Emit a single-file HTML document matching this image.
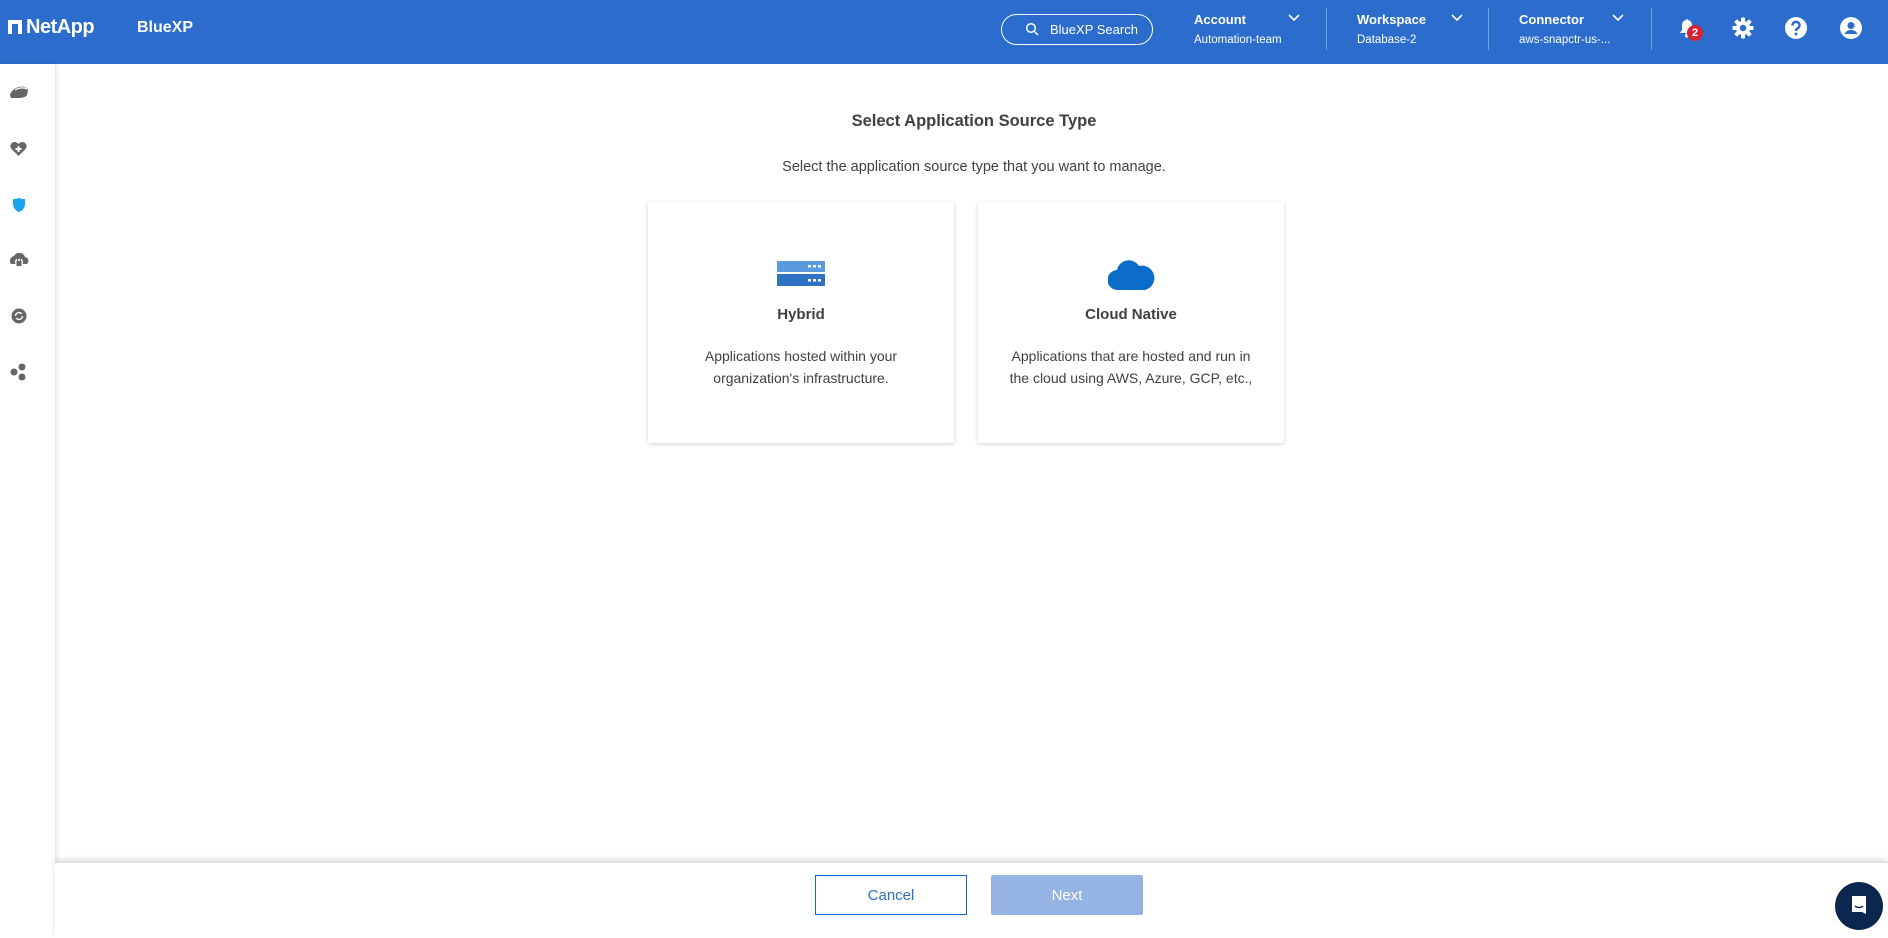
<!DOCTYPE html>
<html><head><style>
*{box-sizing:border-box;margin:0;padding:0}
body{width:1888px;height:938px;overflow:hidden;background:#fff;font-family:"Liberation Sans",sans-serif;position:relative;color:#404040}
.hdr{position:absolute;left:0;top:0;width:1888px;height:64px;background:#2b6ccc;color:#fff}
.abs{position:absolute}
.side{position:absolute;left:0;top:64px;width:55px;height:874px;background:#fff;box-shadow:2px 0 4px rgba(0,0,0,.1)}
.card{position:absolute;top:202px;width:306px;height:241px;background:#fff;box-shadow:0 1px 4px rgba(0,0,0,.18);text-align:center}
.card h3{position:absolute;top:104px;width:100%;font-size:15px;font-weight:bold;color:#404040}
.card p{position:absolute;top:143px;width:100%;font-size:14px;line-height:22px;color:#404040}
.lbl{font-size:13px;font-weight:bold}
.sub{font-size:11.5px}
.div{position:absolute;top:8px;width:1px;height:42px;background:rgba(255,255,255,.35)}
</style></head><body>
<div class="hdr">
 <div class="abs" style="left:8px;top:20px;width:14px;height:14px;background:#fff"></div>
 <div class="abs" style="left:12px;top:24px;width:6px;height:10px;background:#2b6ccc"></div>
 <div class="abs" style="left:26px;top:16px;font-size:20px;font-weight:bold;letter-spacing:-.5px">NetApp</div>
 <div class="abs" style="left:137px;top:19px;font-size:16px;font-weight:bold">BlueXP</div>
 <div class="abs" style="left:1001px;top:14px;width:152px;height:31px;border:1px solid #fff;border-radius:16px;font-size:13px;padding:7px 0 0 48px">BlueXP Search</div>
 <svg class="abs" style="left:1025px;top:22px" width="14" height="14" viewBox="0 0 14 14"><circle cx="6" cy="6" r="4.3" fill="none" stroke="#fff" stroke-width="1.5"/><path d="M9 9l4 4" stroke="#fff" stroke-width="1.5"/></svg>
 <div class="abs" style="left:1194px;top:12px"><div class="lbl">Account</div><div class="sub" style="margin-top:7px">Automation-team</div></div>
 <svg class="abs" style="left:1288px;top:14px" width="12" height="8"><path d="M1 1l5 5 5-5" fill="none" stroke="#fff" stroke-width="1.6"/></svg>
 <div class="div" style="left:1326px"></div>
 <div class="abs" style="left:1357px;top:12px"><div class="lbl">Workspace</div><div class="sub" style="margin-top:7px">Database-2</div></div>
 <svg class="abs" style="left:1451px;top:14px" width="12" height="8"><path d="M1 1l5 5 5-5" fill="none" stroke="#fff" stroke-width="1.6"/></svg>
 <div class="div" style="left:1488px"></div>
 <div class="abs" style="left:1519px;top:12px"><div class="lbl">Connector</div><div class="sub" style="margin-top:7px">aws-snapctr-us-...</div></div>
 <svg class="abs" style="left:1612px;top:14px" width="12" height="8"><path d="M1 1l5 5 5-5" fill="none" stroke="#fff" stroke-width="1.6"/></svg>
 <div class="div" style="left:1651px"></div>
 <svg class="abs" style="left:1678px;top:17px" width="22" height="22" viewBox="0 0 22 22"><path d="M8 3a1 1 0 0 1 2 0c3 .8 4 3 4 6v4l2 3H2l2-3V9c0-3 1-5.2 4-6z" fill="#fff"/><circle cx="9" cy="18.5" r="2" fill="#fff"/></svg>
 <div class="abs" style="left:1687px;top:25px;width:16px;height:16px;border-radius:50%;background:#d9232e;font-size:11px;font-weight:bold;text-align:center;line-height:16px">2</div>
 <svg class="abs" style="left:1731px;top:16px" width="24" height="24" viewBox="0 0 24 24"><g fill="#fff"><circle cx="12" cy="12" r="7"/><rect x="10" y="1.5" width="4" height="21" rx="1"/><rect x="10" y="1.5" width="4" height="21" rx="1" transform="rotate(45 12 12)"/><rect x="10" y="1.5" width="4" height="21" rx="1" transform="rotate(90 12 12)"/><rect x="10" y="1.5" width="4" height="21" rx="1" transform="rotate(135 12 12)"/></g><circle cx="12" cy="12" r="3.2" fill="#2b6ccc"/></svg>
 <svg class="abs" style="left:1784px;top:16px" width="24" height="24" viewBox="0 0 24 24"><circle cx="12" cy="12" r="11" fill="#fff"/><path d="M8.5 9.5a3.5 3.5 0 1 1 5 3c-1 .6-1.5 1-1.5 2.5" fill="none" stroke="#2b6ccc" stroke-width="2.5"/><circle cx="12" cy="18" r="1.5" fill="#2b6ccc"/></svg>
 <svg class="abs" style="left:1839px;top:16px" width="24" height="24" viewBox="0 0 24 24"><circle cx="12" cy="12" r="11" fill="#fff"/><circle cx="12" cy="9.5" r="3.5" fill="#2b6ccc"/><path d="M5.5 18c1.5-3 3.5-4 6.5-4s5 1 6.5 4z" fill="#2b6ccc"/></svg>
</div>
<div class="side">
 <svg class="abs" style="left:9px;top:20px" width="20" height="16" viewBox="0 0 20 16"><path d="M1 12c0-4 4-8 9-9 4-1 8 0 9 3l-1 5c-1 2-5 3-9 3H2z" fill="#666"/><path d="M6 6c3-2 8-3 12-1" stroke="#fff" stroke-width="1.2" fill="none"/></svg>
 <svg class="abs" style="left:10px;top:77px" width="17" height="16" viewBox="0 0 17 16"><path d="M8.5 15L1.5 8C-1 5 1 1 4.5 1c2 0 3 1 4 2 1-1 2-2 4-2 3.5 0 5.5 4 3 7z" fill="#666"/><path d="M8.5 5v6M5.5 8h6" stroke="#fff" stroke-width="2"/></svg>
 <svg class="abs" style="left:12px;top:133px" width="14" height="16" viewBox="0 0 14 16"><path d="M1 2c4 0 6-1 6-1s2 1 6 1v5c0 4-3 7-6 8-3-1-6-4-6-8z" fill="#18a3ee"/></svg>
 <svg class="abs" style="left:9px;top:187px" width="20" height="17" viewBox="0 0 20 17"><path d="M2 13a5 5 0 0 1 3-8 6 6 0 0 1 11 1 4 4 0 0 1 2 7z" fill="#666"/><circle cx="10" cy="11" r="4" fill="#fff"/><rect x="7.5" y="10" width="5" height="5" fill="#666"/><path d="M8.5 10V8.5a1.5 1.5 0 0 1 3 0V10" stroke="#666" fill="none" stroke-width="1.2"/></svg>
 <svg class="abs" style="left:11px;top:244px" width="16" height="16" viewBox="0 0 16 16"><circle cx="8" cy="8" r="7.5" fill="#666"/><path d="M4.5 8a3.5 3.5 0 0 1 6.3-2M11.5 8a3.5 3.5 0 0 1-6.3 2" stroke="#fff" stroke-width="1.4" fill="none"/></svg>
 <svg class="abs" style="left:10px;top:299px" width="18" height="18" viewBox="0 0 18 18"><circle cx="4" cy="9" r="3.5" fill="#666"/><circle cx="12" cy="4" r="3.5" fill="#666"/><circle cx="12" cy="14" r="3.5" fill="#666"/></svg>
</div>
<div class="abs" style="left:55px;top:112px;width:1838px;text-align:center;font-size:16.5px;font-weight:bold;color:#404040">Select Application Source Type</div>
<div class="abs" style="left:55px;top:159px;width:1838px;text-align:center;font-size:14.5px;color:#404040">Select the application source type that you want to manage.</div>
<div class="card" style="left:648px">
 <svg class="abs" style="left:129px;top:59px" width="48" height="25" viewBox="0 0 48 25"><rect width="48" height="11" fill="#5a9be0"/><rect y="13" width="48" height="12" fill="#2f72c4"/><g fill="#fff"><rect x="31" y="4" width="3" height="2.5"/><rect x="36" y="4" width="3" height="2.5"/><rect x="41" y="4" width="3" height="2.5"/><rect x="31" y="18" width="3" height="2.5"/><rect x="36" y="18" width="3" height="2.5"/><rect x="41" y="18" width="3" height="2.5"/></g></svg>
 <h3>Hybrid</h3>
 <p>Applications hosted within your<br>organization's infrastructure.</p>
</div>
<div class="card" style="left:978px">
 <svg class="abs" style="left:130px;top:55px" width="47" height="33" viewBox="0 0 47 33"><path d="M10 33a10 10 0 0 1-1-20A12 12 0 0 1 31 9a10 10 0 0 1 6 24z" fill="#0a6cc8"/></svg>
 <h3>Cloud Native</h3>
 <p>Applications that are hosted and run in<br>the cloud using AWS, Azure, GCP, etc.,</p>
</div>
<div class="abs" style="left:55px;top:862px;width:1833px;height:76px;background:#fff;box-shadow:0 -3px 5px rgba(0,0,0,.12);border-top:1px solid #ddd"></div>
<div class="abs" style="left:815px;top:875px;width:152px;height:40px;border:1px solid #0a6cc8;color:#2f72c4;font-size:15px;text-align:center;line-height:40px">Cancel</div>
<div class="abs" style="left:991px;top:875px;width:152px;height:40px;background:#95b4e3;color:#fff;font-size:15px;text-align:center;line-height:42px;border-radius:2px">Next</div>
<div class="abs" style="left:1835px;top:882px;width:48px;height:48px;border-radius:50%;background:#0b2750"></div>
<svg class="abs" style="left:1849px;top:894px" width="20" height="24" viewBox="0 0 20 24"><path d="M3 2h14v18l-4-2H3z" fill="#fff"/><path d="M6 12c2 2 6 2 8 0" stroke="#0b2750" stroke-width="1.4" fill="none"/></svg>
</body></html>
